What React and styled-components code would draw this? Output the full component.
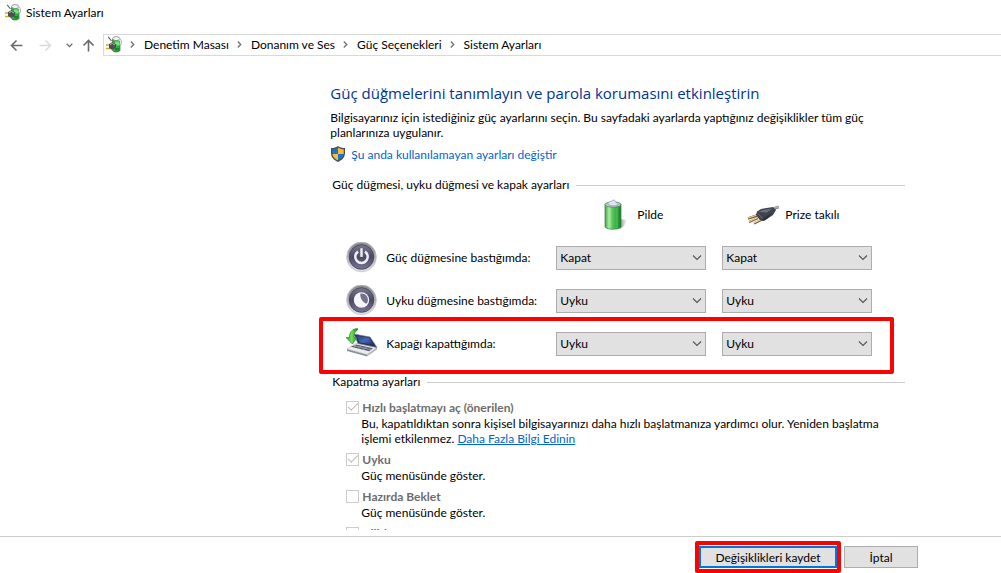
import React from 'react';
import styled, { createGlobalStyle } from 'styled-components';

const GlobalStyle = createGlobalStyle`
  * {
    box-sizing: border-box;
  }

  body {
    margin: 0;
    background: #fff;
    color: #000;
    font-family: Lato, 'Noto Sans', sans-serif;
    font-size: 12px;
    line-height: 15px;
  }

  button, select, input {
    font: inherit;
    color: inherit;
    margin: 0;
  }
`;

const Window = styled.div`
  display: flex;
  flex-direction: column;
  height: 100vh;
  overflow: hidden;
`;

const TitleBar = styled.header`
  display: flex;
  align-items: center;
  gap: 5px;
  height: 24px;
  padding-left: 5px;
  flex: none;
`;

const NavBar = styled.nav`
  display: flex;
  align-items: center;
  height: 22px;
  margin-top: 10px;
  padding-left: 8px;
  flex: none;
`;

const NavButton = styled.button`
  display: flex;
  align-items: center;
  justify-content: center;
  width: ${props => props.$width}px;
  height: 22px;
  padding: 0;
  border: 0;
  background: none;
  color: ${props => (props.disabled ? '#d9d9d9' : '#6b6b6b')};
`;

const AddressBar = styled.ol`
  display: flex;
  align-items: center;
  flex: 1;
  height: 22px;
  margin: 0;
  padding: 0 0 1px 2px;
  list-style: none;
  border: 1px solid #d9d9d9;
  border-right: 0;
`;

const Crumb = styled.li`
  display: flex;
  align-items: center;
  white-space: nowrap;

  svg {
    margin: 0 9px 0 8px;
  }

  a {
    color: #000;
    text-decoration: none;
  }
`;

const Page = styled.main`
  flex: 1;
  min-height: 0;
  overflow: hidden;
  margin-bottom: 6px;
  padding: 25px 16px 0 33%;
`;

const Content = styled.div`
  max-width: 575px;
`;

const Heading = styled.h1`
  margin: 0;
  color: #003399;
  font-family: 'Open Sans', 'Noto Sans', sans-serif;
  font-size: 15px;
  font-weight: 400;
  line-height: 24px;
`;

const Intro = styled.p`
  margin: 5px 0;
`;

const ShieldLink = styled.a`
  display: flex;
  align-items: center;
  gap: 5px;
  height: 18px;
  color: #0066cc;
  text-decoration: none;
`;

const SectionTitle = styled.h2`
  display: flex;
  align-items: center;
  gap: 7px;
  margin: ${props => props.$top}px 0 0;
  padding-left: 2px;
  font-size: 12px;
  font-weight: 400;
  line-height: 16px;
  white-space: nowrap;

  &::after {
    content: '';
    flex: 1;
    height: 1px;
    background: #cccccc;
  }
`;

const SettingRow = styled.div`
  position: relative;
  display: grid;
  grid-template-columns: minmax(0, 194px) 150px 150px;
  column-gap: 16px;
  align-items: center;
  height: 43px;
  padding-left: 16px;
`;

const HighlightedRow = styled(SettingRow)`
  &::after {
    content: '';
    position: absolute;
    top: -5px;
    right: 11px;
    bottom: -9px;
    left: -11px;
    border: 4px solid #ff0000;
    border-radius: 2px;
    pointer-events: none;
  }
`;

const RowLabel = styled.div`
  display: flex;
  align-items: center;
  gap: 8px;
  white-space: nowrap;

  svg {
    flex: none;
  }
`;

const ColumnHead = styled.div`
  display: flex;
  align-items: center;
  gap: ${props => props.$gap}px;
  padding-left: ${props => props.$indent}px;
`;

const SelectBox = styled.div`
  position: relative;

  svg {
    position: absolute;
    top: 8px;
    right: 4px;
    pointer-events: none;
  }
`;

const Select = styled.select`
  display: block;
  width: 100%;
  height: 24px;
  padding: 0 20px 0 3px;
  appearance: none;
  border: 1px solid #adadad;
  border-radius: 0;
  background: #e1e1e1;
`;

const OptionList = styled.div`
  display: grid;
  gap: 4px;
  padding: 8px 0 0 16px;
`;

const OptionLabel = styled.label`
  display: flex;
  align-items: center;
  gap: 3px;
  height: 18px;
  color: #6d6d6d;
  font-weight: 700;
`;

const Checkbox = styled.input`
  appearance: none;
  width: 13px;
  height: 13px;
  border: 1px solid #cccccc;
  background: #fff;
  display: grid;
  place-items: center;

  &:checked::after {
    content: '';
    width: 9px;
    height: 4px;
    margin-bottom: 3px;
    border: solid #bcbcbc;
    border-width: 0 0 1px 1px;
    transform: rotate(-45deg);
  }
`;

const OptionText = styled.p`
  margin: 0;
  padding-left: 15px;
`;

const TextLink = styled.a`
  color: #0066cc;
`;

const Footer = styled.footer`
  display: flex;
  justify-content: flex-end;
  align-items: center;
  gap: 3px;
  height: 37px;
  padding: 4px 83px 0 0;
  border-top: 1px solid #cccccc;
  flex: none;
`;

const SaveFrame = styled.div`
  display: flex;
  align-items: center;
  height: 32px;
  border: 4px solid #ff0000;
  border-radius: 2px;
`;

const Button = styled.button`
  width: ${props => props.$width}px;
  height: 22px;
  padding: 0;
  border: ${props => (props.$primary ? '2px solid #0078d7' : '1px solid #adadad')};
  background: #e1e1e1;
`;

const PowerOptionsIcon = () => (
  <svg width="16" height="17" viewBox="0 0 16 17" aria-hidden="true">
    <path d="M6.500 3.500c1-2 6.500-2 7.500 0v11c-1 2-6.500 2-7.500 0z" fill="#2fae3a" stroke="#3f6544" strokeWidth=".7" />
    <path d="M9 5.500h4.500v4H9z" fill="#6cec74" />
    <path d="M9 12h4.500v2.500H9z" fill="#168a26" />
    <ellipse cx="10.200" cy="2.600" rx="3.600" ry="2" fill="#f3f7f7" stroke="#6b756f" strokeWidth=".7" />
    <path d="M12.500 4c2.500-.5 3.200 2.500 1.500 5" stroke="#8b9599" strokeWidth="2" fill="none" />
    <path d="M12.500 4c2.500-.5 3 2.500 1.500 4.500" stroke="#eef4f5" strokeWidth="1.200" fill="none" />
    <path d="M2.200.8L5.500 5" stroke="#60666a" strokeWidth="1.200" />
    <path d="M0 9h4M0 12.500h4" stroke="#dda52f" strokeWidth="1.600" />
    <path d="M3 8l3-1.800 4.500 2.300-1 3.500-4 1.800L3 12z" fill="#4a4f53" />
    <path d="M4 8.500l2.500-1 2.500 1.500" stroke="#b3babd" fill="none" />
  </svg>
);

const Arrow = ({ up }) => (
  <svg width="13" height="13" viewBox="0 0 13 13" fill="none" stroke="currentColor" strokeWidth="1.600" aria-hidden="true">
    <path d={up ? 'M6.5 12.5V1.5M1.5 6.5l5-5 5 5' : 'M12.5 6.5H1.5M6.5 1.5l-5 5 5 5'} />
  </svg>
);

const ForwardArrow = () => (
  <svg width="13" height="13" viewBox="0 0 13 13" fill="none" stroke="currentColor" strokeWidth="1.4" aria-hidden="true">
    <path d="M.5 6.5h11M6.5 1.5l5 5-5 5" />
  </svg>
);

const SmallDown = () => (
  <svg width="7" height="5" viewBox="0 0 7 5" fill="none" stroke="currentColor" strokeWidth="1.3" aria-hidden="true">
    <path d="M.7.8l2.8 2.8L6.3.8" />
  </svg>
);

const Separator = () => (
  <svg width="5" height="7" viewBox="0 0 5 7" fill="none" stroke="#747474" strokeWidth="1.4" aria-hidden="true">
    <path d="M.8.6l2.9 2.9L.8 6.4" />
  </svg>
);

const Chevron = () => (
  <svg width="10" height="7" viewBox="0 0 10 7" fill="none" stroke="#555" strokeWidth="1.1" aria-hidden="true">
    <path d="M1 1.5l4 4 4-4" />
  </svg>
);

const ShieldIcon = () => (
  <svg width="16" height="16" viewBox="0 0 16 16" aria-hidden="true">
    <path d="M8 0c2 1.500 4 2 7 2v5c0 4.200-2.800 7-7 9-4.200-2-7-4.800-7-9V2c3 0 5-.5 7-2z" fill="#4a4d52" />
    <path d="M8 1.500V8H2.300V3.300C4.700 3.200 6.400 2.600 8 1.500z" fill="#1774cf" />
    <path d="M8 1.500V8h5.700V3.300C11.300 3.200 9.600 2.600 8 1.500z" fill="#ffbd2d" />
    <path d="M2.400 8H8v6.600C4.900 13 2.800 11 2.400 8z" fill="#ffbd2d" />
    <path d="M13.600 8H8v6.600c3.100-1.600 5.200-3.600 5.600-6.600z" fill="#1774cf" />
  </svg>
);

const BatteryIcon = () => (
  <svg width="26" height="32" viewBox="0 0 26 32" aria-hidden="true">
    <defs>
      <linearGradient id="battery">
        <stop offset="0" stopColor="#4c9c4d" />
        <stop offset=".25" stopColor="#a4eba0" />
        <stop offset=".45" stopColor="#5cc75b" />
        <stop offset=".8" stopColor="#2ba33b" />
        <stop offset="1" stopColor="#157a25" />
      </linearGradient>
      <linearGradient id="batteryShadow">
        <stop offset="0" stopColor="#999" />
        <stop offset="1" stopColor="#fff" />
      </linearGradient>
    </defs>
    <path d="M18 20l7 1-3 6-4 3z" fill="url(#batteryShadow)" />
    <path d="M3 5v23c2 3 14 3 16 0V5z" fill="url(#battery)" stroke="#338243" strokeWidth=".7" />
    <ellipse cx="11" cy="5.500" rx="8" ry="2.700" fill="#b8c4c7" stroke="#568358" strokeWidth=".7" />
    <path d="M6 4.500c1-3 3-1 4-3 2-1 4 0 4 2 2 0 2 2 2 2-2 2-9 2-10-1z" fill="#dce5ef" stroke="#8290a4" strokeWidth=".6" />
    <path d="M8 9v20M15 9v20" stroke="#cbffc0" opacity=".25" />
  </svg>
);

const PlugIcon = () => (
  <svg width="32" height="20" viewBox="0 0 32 20" aria-hidden="true">
    <path d="M24 5.500c4-.5 4-4.500 8-3" stroke="#8b8e96" strokeWidth="3" fill="none" />
    <path d="M25 4.500c3-.5 3-3 7-2.500" stroke="#c4c6cb" strokeWidth="1" fill="none" />
    <path d="M1 13.500l9-3M2 17l9-4M7 18.500l8-4" stroke="#795a34" strokeWidth="2.400" />
    <path d="M1 13l9-3M2 16.500l9-4M7 18l8-4" stroke="#f0d3a2" strokeWidth="1.200" />
    <path d="M10 6.500l4-2.500 12-2 3 3-3 5-9 6-4-1-4-5z" fill="#3f434e" />
    <path d="M11 7l5-2 9-1.500-5 4z" fill="#6d727e" />
    <path d="M11 8.500l5 5.500" stroke="#7d818b" strokeWidth=".7" />
    <path d="M15 14l10-6-5 6-5 2z" fill="#20242c" opacity=".6" />
  </svg>
);

const RoundIcon = ({ sleep }) => (
  <svg width="32" height="32" viewBox="0 0 32 32" aria-hidden="true">
    <defs>
      <linearGradient id={sleep ? 'sleepFace' : 'powerFace'} x1="0" y1="0" x2="0" y2="1">
        <stop offset="0" stopColor="#77778e" />
        <stop offset=".5" stopColor="#4b4965" />
        <stop offset="1" stopColor="#777695" />
      </linearGradient>
      <linearGradient id={sleep ? 'sleepRim' : 'powerRim'} x1="0" y1="0" x2="0" y2="1">
        <stop offset="0" stopColor="#88888c" />
        <stop offset=".6" stopColor="#b9b9bd" />
        <stop offset="1" stopColor="#e2e2e4" />
      </linearGradient>
    </defs>
    <circle cx="15.500" cy="15" r="14.900" fill={sleep ? 'url(#sleepRim)' : 'url(#powerRim)'} stroke="#c6c6ca" strokeWidth=".7" />
    <circle cx="15.500" cy="15" r="12.300" fill={sleep ? 'url(#sleepFace)' : 'url(#powerFace)'} stroke="#404055" strokeWidth=".8" />
    {sleep ? (
      <>
        <circle cx="15.500" cy="15" r="7.700" fill="#f5f5fa" />
        <path d="M14.300 8.700c3.700-1.200 7.500 2 7.600 6 0 1.700-.5 3-1.500 4-3.600-1.500-6.500-5.500-6.100-10z" fill="#74728a" />
      </>
    ) : (
      <g fill="none" stroke="#eeeef4">
        <path d="M12 9.600a6.200 6.200 0 1 0 7 0" strokeWidth="2.500" />
        <path d="M15.500 6.200v8.700" stroke="#5d5b76" strokeWidth="4.400" />
        <path d="M15.500 6.200v8.700" strokeWidth="2.400" />
      </g>
    )}
  </svg>
);

const LidIcon = () => (
  <svg width="32" height="32" viewBox="0 0 32 32" aria-hidden="true">
    <defs>
      <linearGradient id="screen" x1="0" y1="0" x2="1" y2="1">
        <stop offset="0" stopColor="#263979" />
        <stop offset=".5" stopColor="#4568bd" />
        <stop offset="1" stopColor="#172551" />
      </linearGradient>
      <linearGradient id="arrow">
        <stop offset="0" stopColor="#25a62c" />
        <stop offset=".5" stopColor="#76de57" />
        <stop offset="1" stopColor="#16841e" />
      </linearGradient>
    </defs>
    <path d="M1 21l20 5.500v2L1 23z" fill="#8d9199" />
    <path d="M21 26.500l10-7v2l-10 7z" fill="#b4b7be" />
    <path d="M10 15l21 4.500-10 7L1 21z" fill="#eceded" stroke="#a2a6b0" strokeWidth=".5" />
    <path d="M10 16.500l17 3.700-4 3-18-4.500z" fill="#59606e" />
    <path d="M8 17.700l17 4M11 16l-3 3M16 17l-4 3.500M21 18.500l-4 3.500" stroke="#b4b8c2" strokeWidth=".6" />
    <path d="M8 6l16 3 7 10.500-19-4z" fill="#252e43" stroke="#7c8498" strokeWidth=".7" />
    <path d="M10 7.300l13.300 2.700 5 7.500-14.800-3.300z" fill="url(#screen)" />
    <path d="M11.500.5C6 1 3.500 4 3.500 9.500H0l6.500 6.500 4.500-6.500H8c0-4 1-6 3.500-7.500z" fill="url(#arrow)" stroke="#298b2a" strokeWidth=".7" />
  </svg>
);

const crumbs = ['Denetim Masası', 'Donanım ve Ses', 'Güç Seçenekleri', 'Sistem Ayarları'];

const settings = [
  { id: 'power', label: 'Güç düğmesine bastığımda:', value: 'Kapat', icon: <RoundIcon /> },
  { id: 'sleep', label: 'Uyku düğmesine bastığımda:', value: 'Uyku', icon: <RoundIcon sleep /> },
  { id: 'lid', label: 'Kapağı kapattığımda:', value: 'Uyku', icon: <LidIcon />, highlighted: true },
];

const ActionSelect = ({ id, label, value }) => (
  <SelectBox>
    <Select id={id} aria-label={label} defaultValue={value}>
      <option>Kapat</option>
      <option>Uyku</option>
    </Select>
    <Chevron />
  </SelectBox>
);

const ShutdownOption = ({ label, checked, children }) => (
  <div>
    <OptionLabel>
      <Checkbox type="checkbox" defaultChecked={checked} disabled />
      {label}
    </OptionLabel>
    {children && <OptionText>{children}</OptionText>}
  </div>
);

const App = () => (
  <Window>
    <GlobalStyle />
    <TitleBar>
      <PowerOptionsIcon />
      <span>Sistem Ayarları</span>
    </TitleBar>
    <NavBar>
      <NavButton type="button" aria-label="Geri" $width={16}>
        <Arrow />
      </NavButton>
      <NavButton type="button" aria-label="İleri" $width={42} disabled>
        <ForwardArrow />
      </NavButton>
      <NavButton type="button" aria-label="Son konumlar" $width={7}>
        <SmallDown />
      </NavButton>
      <NavButton type="button" aria-label="Yukarı" $width={30}>
        <Arrow up />
      </NavButton>
      <AddressBar>
        <PowerOptionsIcon />
        {crumbs.map(crumb => (
          <Crumb key={crumb}>
            <Separator />
            <a href="#crumb">{crumb}</a>
          </Crumb>
        ))}
      </AddressBar>
    </NavBar>

    <Page>
      <Content>
        <Heading>Güç düğmelerini tanımlayın ve parola korumasını etkinleştirin</Heading>
        <Intro>
          Bilgisayarınız için istediğiniz güç ayarlarını seçin. Bu sayfadaki ayarlarda yaptığınız değişiklikler tüm güç
          planlarınıza uygulanır.
        </Intro>
        <ShieldLink href="#unlock">
          <ShieldIcon />
          Şu anda kullanılamayan ayarları değiştir
        </ShieldLink>

        <SectionTitle $top={14}>Güç düğmesi, uyku düğmesi ve kapak ayarları</SectionTitle>
        <SettingRow>
          <span />
          <ColumnHead $indent={46} $gap={9}>
            <BatteryIcon />
            Pilde
          </ColumnHead>
          <ColumnHead $indent={25} $gap={6}>
            <PlugIcon />
            Prize takılı
          </ColumnHead>
        </SettingRow>
        {settings.map(({ id, label, value, icon, highlighted }) => {
          const Row = highlighted ? HighlightedRow : SettingRow;
          return (
            <Row key={id}>
              <RowLabel>
                {icon}
                <label htmlFor={`${id}-battery`}>{label}</label>
              </RowLabel>
              <ActionSelect id={`${id}-battery`} label={`${label} Pilde`} value={value} />
              <ActionSelect id={`${id}-plugged`} label={`${label} Prize takılı`} value={value} />
            </Row>
          );
        })}

        <SectionTitle $top={9}>Kapatma ayarları</SectionTitle>
        <OptionList>
          <ShutdownOption label="Hızlı başlatmayı aç (önerilen)" checked>
            Bu, kapatıldıktan sonra kişisel bilgisayarınızı daha hızlı başlatmanıza yardımcı olur. Yeniden başlatma
            işlemi etkilenmez. <TextLink href="#more">Daha Fazla Bilgi Edinin</TextLink>
          </ShutdownOption>
          <ShutdownOption label="Uyku" checked>
            Güç menüsünde göster.
          </ShutdownOption>
          <ShutdownOption label="Hazırda Beklet">Güç menüsünde göster.</ShutdownOption>
          <ShutdownOption label="Kilitle" />
        </OptionList>
      </Content>
    </Page>

    <Footer>
      <SaveFrame>
        <Button type="submit" $width={138} $primary>
          Değişiklikleri kaydet
        </Button>
      </SaveFrame>
      <Button type="button" $width={74}>
        İptal
      </Button>
    </Footer>
  </Window>
);

export default App;
